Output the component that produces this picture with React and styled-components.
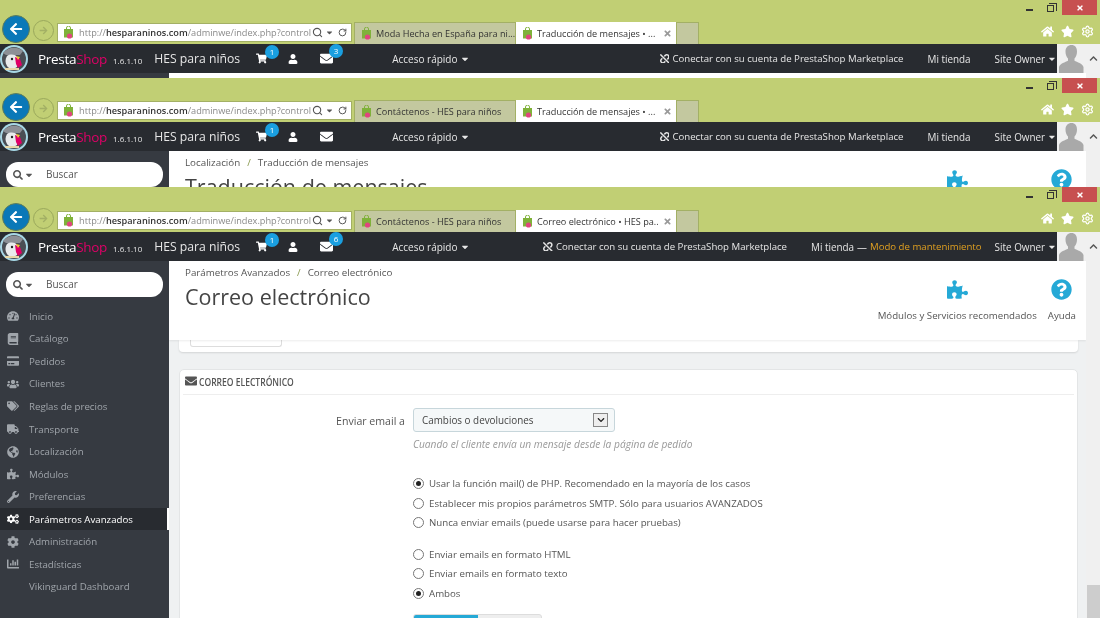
import React from "react";
import styled, { createGlobalStyle } from "styled-components";
import { Settings, Search as SearchGlyph, RotateCw } from "lucide-react";
import {
  FaTachometerAlt, FaBook, FaCreditCard, FaUsers, FaTags, FaTruck, FaGlobeAmericas, FaPuzzlePiece,
  FaWrench, FaCogs, FaCog, FaChartBar, FaShoppingCart, FaUser, FaEnvelope, FaSearch, FaQuestionCircle,
  FaUnlink, FaHome, FaStar, FaCaretDown, FaChevronUp, FaChevronDown, FaArrowLeft, FaArrowRight, FaTimes,
} from "react-icons/fa";

const Global = createGlobalStyle`
  html, body { margin: 0; padding: 0; background: #fff; overflow: hidden; }
  body { font-family: "Open Sans", "Liberation Sans", sans-serif; color: #555; }
  * { box-sizing: border-box; }
`;

const Screen = styled.div`
  width: 1100px;
  height: 618px;
  display: flex;
  flex-direction: column;
  overflow: hidden;
  filter: blur(0.3px);
`;
const Win = styled.section`
  height: ${(p) => p.$height}px;
  flex: none;
  display: flex;
  flex-direction: column;
  overflow: hidden;
  background: #fff;
`;
const Chrome = styled.header`
  height: ${(p) => p.$height}px;
  flex: none;
  display: flex;
  align-items: flex-end;
  padding-left: 2px;
  background: #c1cf74;
`;
const BackBtn = styled.div`
  width: 28px;
  height: 28px;
  margin-bottom: 1px;
  border-radius: 50%;
  flex: none;
  display: flex;
  align-items: center;
  justify-content: center;
  background: #0a78b8;
  border: 1px solid #5d7d5a;
  color: #fff;
  font-size: 14px;
`;
const FwdBtn = styled.div`
  width: 21px;
  height: 21px;
  margin: 0 3px 3px 3px;
  border-radius: 50%;
  flex: none;
  display: flex;
  align-items: center;
  justify-content: center;
  border: 1px solid #9aa85c;
  color: #a3b065;
  font-size: 9px;
`;
const Address = styled.div`
  width: 295px;
  height: 19px;
  margin-bottom: 2px;
  flex: none;
  display: flex;
  align-items: center;
  padding: 0 4px 0 5px;
  background: #fff;
  border: 1px solid #a3b065;
  font-size: 9.2px;
  color: #8a8a8a;
  white-space: nowrap;
`;
const Url = styled.span`
  margin-left: 5px;
  flex: 1;
  overflow: hidden;
  b { color: #333; font-weight: 600; }
`;
const AddressTool = styled.span`
  display: inline-flex;
  align-items: center;
  flex: none;
  color: #555;
  font-size: 9px;
  margin-left: ${(p) => p.$gap || 0}px;
`;
const Tabs = styled.div`
  display: flex;
  height: 22px;
  margin-left: 2px;
  flex: none;
`;
const Tab = styled.div`
  width: ${(p) => p.$width}px;
  display: flex;
  align-items: center;
  gap: 4px;
  padding: 0 ${(p) => (p.$active ? 4 : 0)}px 0 6px;
  background: ${(p) => (p.$active ? "#fff" : "#c3c89f")};
  border: 1px solid #a3b065;
  border-width: ${(p) => (p.$active ? "0" : "1px 1px 0 1px")};
  font-size: 9.15px;
  color: #333;
  white-space: nowrap;
  overflow: hidden;
  svg { flex: none; }
`;
const TabText = styled.span`
  flex: 1;
  min-width: 0;
  overflow: hidden;
`;
const TabClose = styled.span`
  color: #999;
  font-size: 9px;
  display: inline-flex;
  flex: none;
`;
const ChromeRight = styled.div`
  margin-left: auto;
  height: 100%;
  width: 70px;
  display: flex;
  flex-direction: column;
  align-items: flex-end;
`;
const WinControls = styled.div`
  display: flex;
  align-items: flex-start;
  height: 22px;
  padding-right: 3px;
`;
const MinBtn = styled.span`
  width: 7px;
  height: 2px;
  background: #333;
  margin: 9px 14px 0 0;
`;
const RestoreBtn = styled.span`
  position: relative;
  width: 7px;
  height: 7px;
  border: 1px solid #333;
  margin: 5px 8px 0 0;
  &::after {
    content: "";
    position: absolute;
    left: 1px;
    top: -3px;
    width: 7px;
    height: 7px;
    border: 1px solid #333;
    border-width: 1px 1px 0 0;
  }
`;
const CloseBtn = styled.span`
  width: 35px;
  height: 15px;
  background: #c75050;
  color: #fff;
  font-size: 8px;
  display: flex;
  align-items: center;
  justify-content: center;
`;
const Tools = styled.div`
  display: flex;
  gap: 7px;
  padding-right: 6px;
  color: #fff;
  font-size: 13px;
  align-items: center;
  height: 19px;
  svg { display: block; }
`;
const Row = styled.div`
  flex: 1;
  min-height: 0;
  display: flex;
`;
const Main = styled.div`
  flex: 1;
  min-width: 0;
  display: flex;
  flex-direction: column;
`;
const Scroll = styled.aside`
  width: 14px;
  flex: none;
  display: flex;
  flex-direction: column;
  align-items: center;
  background: #f0f0f0;
  padding-top: 10px;
  color: #555;
  font-size: 9px;
`;
const Thumb = styled.div`
  margin-top: auto;
  width: 13px;
  height: 33px;
  background: #cdcdcd;
`;
const Nav = styled.nav`
  height: 29px;
  flex: none;
  display: flex;
  align-items: center;
  background: #282b30;
  color: #e6e6e6;
  font-size: 10px;
  white-space: nowrap;
`;
const Logo = styled.svg`
  width: 30px;
  height: 30px;
  flex: none;
  margin-left: -1px;
`;
const Word = styled.span`
  margin-left: 9px;
  font-size: 13.5px;
  letter-spacing: -0.3px;
  color: #fff;
  i { font-style: normal; color: #df0067; }
`;
const Version = styled.span`
  margin-left: 6px;
  font-size: 8px;
  padding-top: 3px;
`;
const Shop = styled.span`
  margin-left: 12px;
  font-size: 12.2px;
`;
const NavIcon = styled.span`
  position: relative;
  display: inline-flex;
  font-size: ${(p) => p.$size || 11}px;
  margin-left: ${(p) => p.$left}px;
  color: #fff;
`;
const Badge = styled.b`
  position: absolute;
  top: -8px;
  left: 9px;
  width: 14px;
  height: 14px;
  border-radius: 50%;
  background: #1a9fe0;
  color: #fff;
  font-size: 8px;
  font-weight: 400;
  line-height: 14px;
  text-align: center;
`;
const QuickAccess = styled.span`
  margin-left: 59px;
  display: inline-flex;
  align-items: center;
  gap: 3px;
`;
const NavRight = styled.div`
  margin-left: auto;
  display: flex;
  align-items: center;
`;
const Link = styled.span`
  margin-left: ${(p) => p.$left}px;
  display: inline-flex;
  align-items: center;
  gap: ${(p) => p.$gap ?? 3}px;
  font-size: ${(p) => p.$size || 9.9}px;
`;
const Warn = styled.span`
  color: #e0a020;
  font-size: 9.65px;
`;
const Avatar = styled.svg`
  width: 29px;
  height: 29px;
  flex: none;
  background: #f0f0f0;
`;
const Body = styled.div`
  flex: 1;
  min-height: 0;
  display: flex;
`;
const Side = styled.div`
  width: 169px;
  flex: none;
  background: #363a41;
  padding-top: 11px;
  font-size: 9.7px;
  color: #a0a5ab;
`;
const Search = styled.div`
  margin: 0 6px 8px;
  height: 25px;
  border-radius: 12px;
  background: #fff;
  color: #555;
  display: flex;
  align-items: center;
  padding-left: 7px;
  gap: 1px;
  font-size: 10px;
`;
const SearchLabel = styled.span`
  margin-left: 11px;
  line-height: 25px;
  height: 25px;
`;
const Item = styled.div`
  height: 22.55px;
  display: grid;
  grid-template-columns: 29px 1fr;
  align-items: center;
  white-space: nowrap;
  background: ${(p) => (p.$active ? "#282b30" : "transparent")};
  color: ${(p) => (p.$active ? "#fff" : "inherit")};
  border-right: 2px solid ${(p) => (p.$active ? "#fff" : "transparent")};
`;
const ItemIcon = styled.span`
  display: flex;
  justify-content: center;
  padding-right: 3px;
  font-size: 12px;
`;
const Content = styled.div`
  flex: 1;
  min-width: 0;
  background: #eff1f2;
  overflow: hidden;
`;
const PageHead = styled.div`
  height: 79px;
  background: #fff;
  box-shadow: 0 1px 2px rgba(0, 0, 0, 0.08);
  display: flex;
  justify-content: space-between;
  padding: 5px 10px 0 16px;
  position: relative;
`;
const Crumbs = styled.div`
  font-size: 9.8px;
  line-height: 14px;
  color: #555;
  i { font-style: normal; color: #8a9a50; margin: 0 7px; }
`;
const Title = styled.h1`
  margin: 2px 0 0;
  font-size: 21.5px;
  line-height: 30px;
  font-weight: 400;
  color: #444;
  white-space: nowrap;
`;
const Actions = styled.div`
  display: flex;
  gap: 11px;
  padding-top: 13px;
`;
const Action = styled.div`
  display: flex;
  flex-direction: column;
  align-items: center;
  font-size: 9.7px;
  color: #555;
  white-space: nowrap;
  svg { color: #25a9d6; font-size: 21px; margin-bottom: 9px; }
`;
const Panels = styled.div`
  padding: 0 8px 0 10px;
`;
const ClippedPanel = styled.div`
  height: 12px;
  background: #fff;
  border-radius: 0 0 4px 4px;
  box-shadow: 0 1px 2px rgba(0, 0, 0, 0.12);
  margin-bottom: 17px;
  padding-left: 11px;
`;
const ClippedButton = styled.div`
  width: 92px;
  height: 7px;
  border: 1px solid #ddd;
  border-top: 0;
  border-radius: 0 0 3px 3px;
`;
const Panel = styled.div`
  background: #fff;
  border: 1px solid #e3e5e6;
  border-radius: 5px;
  padding: 0 0 40px;
`;
const PanelHead = styled.div`
  margin: 0 3px;
  height: 25px;
  padding: 0 0 2px 2px;
  display: flex;
  align-items: center;
  gap: 2px;
  border-bottom: 1px solid #eee;
  font-size: 11.4px;
  font-weight: 600;
  color: #555;
  svg { font-size: 12px; flex: none; }
`;
const PanelTitle = styled.span`
  display: inline-block;
  white-space: nowrap;
  transform: scaleX(0.75);
  transform-origin: left center;
`;
const Form = styled.div`
  display: grid;
  grid-template-columns: 225px 1fr;
  column-gap: 8px;
  padding-top: 13px;
`;
const Label = styled.label`
  text-align: right;
  font-size: 10.6px;
  line-height: 26px;
  color: #555;
`;
const Select = styled.div`
  width: 202px;
  height: 24px;
  display: flex;
  align-items: center;
  justify-content: space-between;
  padding: 0 6px 0 8px;
  background: #f5f8f9;
  border: 1px solid #c7d6db;
  border-radius: 3px;
  font-size: 9.9px;
  color: #444;
`;
const SelectArrow = styled.span`
  width: 15px;
  height: 14px;
  display: flex;
  align-items: center;
  justify-content: center;
  background: #eee;
  border: 1px solid #888;
  color: #222;
  font-size: 8px;
`;
const Help = styled.p`
  margin: 5px 0 23px;
  font-size: 10.2px;
  line-height: 14px;
  font-style: italic;
  color: #999;
`;
const Group = styled.div`
  margin-bottom: ${(p) => p.$after}px;
`;
const Option = styled.div`
  height: 19.5px;
  display: flex;
  align-items: center;
  gap: 5px;
  font-size: 9.7px;
  color: #555;
  white-space: nowrap;
`;
const Radio = styled.span`
  width: 11px;
  height: 11px;
  flex: none;
  border-radius: 50%;
  border: 1px solid #777;
  background: #fff;
  display: flex;
  align-items: center;
  justify-content: center;
  &::after {
    content: "";
    width: 5px;
    height: 5px;
    border-radius: 50%;
    background: ${(p) => (p.$on ? "#222" : "transparent")};
  }
`;
const Toggle = styled.div`
  width: 129px;
  height: 24px;
  display: flex;
  border-radius: 3px;
  overflow: hidden;
  background: #eee;
  border: 1px solid #ddd;
`;
const ToggleOn = styled.span`
  width: 64px;
  background: #25a9d6;
`;

const Favicon = () => (
  <svg width="11" height="13" viewBox="0 0 11 13">
    <path d="M1 3h9v8.5H1z" fill="#7fb13a" />
    <path d="M3.5 3.5V2a2 2 0 0 1 4 0v1.5" fill="none" stroke="#7fb13a" />
    <circle cx="6.5" cy="10" r="2.6" fill="#e0457f" />
  </svg>
);
const PuffinLogo = () => (
  <Logo viewBox="0 0 30 30">
    <circle cx="15" cy="15" r="14" fill="#a8d8e6" />
    <circle cx="15" cy="15" r="12" fill="#4a4e54" />
    <path d="M4 9c5-6 14-7 20-2l-3 4H7z" fill="#8d9096" />
    <path d="M8 12c3-2 8-2 10 1 1 3 1 7 0 10-4 3-8 2-10-1-2-3-2-7 0-10z" fill="#e9ebec" />
    <path d="M16 13l5 2 2 6-4 3-2-4z" fill="#df0067" />
    <path d="M17 12l4 1-2 3z" fill="#f4c430" />
    <circle cx="13" cy="15" r="1.2" fill="#222" />
    <path d="M6 24h14v2H6z" fill="#e8d9a8" />
  </Logo>
);
const UserSilhouette = () => (
  <Avatar viewBox="0 0 29 29">
    <path
      d="M14.5 1c3.6 0 5.5 2.6 5.5 6.500 0 3-1 5.400-2.500 7v2.200c2.500 1.500 8 2.500 9 6.300V29H2v-6c1-3.800 6.500-4.800 9-6.300v-2.200c-1.500-1.600-2.500-4-2.500-7C8.500 3.600 10.900 1 14.500 1z"
      fill="#a9a9a9"
    />
  </Avatar>
);

const menu = [
  ["Inicio", FaTachometerAlt],
  ["Catálogo", FaBook],
  ["Pedidos", FaCreditCard],
  ["Clientes", FaUsers],
  ["Reglas de precios", FaTags],
  ["Transporte", FaTruck],
  ["Localización", FaGlobeAmericas],
  ["Módulos", FaPuzzlePiece],
  ["Preferencias", FaWrench],
  ["Parámetros Avanzados", FaCogs, true],
  ["Administración", FaCog],
  ["Estadísticas", FaChartBar],
  ["Vikinguard Dashboard", null],
];

function Window({ height, chrome = 44, host, tab1, tab2, mail, maintenance, thumb, crumb1, crumb2, title, children }) {
  return (
    <Win $height={height}>
      <Chrome $height={chrome}>
        <BackBtn><FaArrowLeft /></BackBtn>
        <FwdBtn><FaArrowRight /></FwdBtn>
        <Address>
          <Favicon />
          <Url>http://<b>{host}</b>/adminwe/index.php?control</Url>
          <AddressTool><SearchGlyph size={11} strokeWidth={2.4} /></AddressTool>
          <AddressTool $gap={2}><FaCaretDown /></AddressTool>
          <AddressTool $gap={4}><RotateCw size={9} strokeWidth={2.6} /></AddressTool>
        </Address>
        <Tabs>
          <Tab $width={162}><Favicon /><TabText>{tab1}</TabText></Tab>
          <Tab $width={160} $active><Favicon /><TabText>{tab2}</TabText><TabClose><FaTimes /></TabClose></Tab>
          <Tab $width={23} />
        </Tabs>
        <ChromeRight>
          <WinControls>
            <MinBtn /><RestoreBtn /><CloseBtn><FaTimes /></CloseBtn>
          </WinControls>
          <Tools><FaHome /><FaStar /><Settings size={13} strokeWidth={2.4} /></Tools>
        </ChromeRight>
      </Chrome>
      <Row>
        <Main>
          <Nav>
            <PuffinLogo />
            <Word>Presta<i>Shop</i></Word>
            <Version>1.6.1.10</Version>
            <Shop>HES para niños</Shop>
            <NavIcon $left={16} $size={11}><FaShoppingCart /><Badge>1</Badge></NavIcon>
            <NavIcon $left={21} $size={10}><FaUser /></NavIcon>
            <NavIcon $left={22} $size={13}><FaEnvelope />{mail && <Badge>{mail}</Badge>}</NavIcon>
            <QuickAccess>Acceso rápido <FaCaretDown /></QuickAccess>
            <NavRight>
              <Link $left={0} $size={9.65}><FaUnlink />Conectar con su cuenta de PrestaShop Marketplace</Link>
              <Link $left={24}>Mi tienda</Link>
              {maintenance && <Link $left={3}>— <Warn>Modo de mantenimiento</Warn></Link>}
              <Link $left={maintenance ? 13 : 24} $gap={2}>Site Owner <FaCaretDown /></Link>
              <UserSilhouette />
            </NavRight>
          </Nav>
          <Body>
            <Side>
              <Search>
                <FaSearch /><FaCaretDown />
                <SearchLabel>Buscar</SearchLabel>
              </Search>
              {menu.map(([label, Icon, active]) => (
                <Item key={label} $active={active}>
                  <ItemIcon>{Icon && <Icon />}</ItemIcon>
                  <span>{label}</span>
                </Item>
              ))}
            </Side>
            <Content>
              <PageHead>
                <div>
                  <Crumbs>{crumb1}<i>/</i>{crumb2}</Crumbs>
                  <Title>{title}</Title>
                </div>
                <Actions>
                  <Action><FaPuzzlePiece />Módulos y Servicios recomendados</Action>
                  <Action><FaQuestionCircle />Ayuda</Action>
                </Actions>
              </PageHead>
              {children}
            </Content>
          </Body>
        </Main>
        <Scroll>
          <FaChevronUp />
          {thumb && <Thumb />}
        </Scroll>
      </Row>
    </Win>
  );
}

export default function App() {
  return (
    <Screen>
      <Global />
      <Window height={78} host="hesparaninos.com" tab1="Moda Hecha en España para ni..." tab2="Traducción de mensajes • ..." mail="3" crumb1="Localización" crumb2="Traducción de mensajes" title="Traducción de mensajes" />
      <Window height={109} host="hesparaninos.com" tab1="Contáctenos - HES para niños" tab2="Traducción de mensajes • ..." crumb1="Localización" crumb2="Traducción de mensajes" title="Traducción de mensajes" />
      <Window height={431} chrome={45} host="hesparaninos.com" tab1="Contáctenos - HES para niños" tab2="Correo electrónico • HES pa..." mail="6" maintenance thumb crumb1="Parámetros Avanzados" crumb2="Correo electrónico" title="Correo electrónico">
        <Panels>
          <ClippedPanel><ClippedButton /></ClippedPanel>
          <Panel>
            <PanelHead><FaEnvelope /><PanelTitle>CORREO ELECTRÓNICO</PanelTitle></PanelHead>
            <Form>
              <Label>Enviar email a</Label>
              <div>
                <Select>Cambios o devoluciones<SelectArrow><FaChevronDown /></SelectArrow></Select>
                <Help>Cuando el cliente envía un mensaje desde la página de pedido</Help>
                <Group $after={12}>
                  <Option><Radio $on />Usar la función mail() de PHP. Recomendado en la mayoría de los casos</Option>
                  <Option><Radio />Establecer mis propios parámetros SMTP. Sólo para usuarios AVANZADOS</Option>
                  <Option><Radio />Nunca enviar emails (puede usarse para hacer pruebas)</Option>
                </Group>
                <Group $after={11}>
                  <Option><Radio />Enviar emails en formato HTML</Option>
                  <Option><Radio />Enviar emails en formato texto</Option>
                  <Option><Radio $on />Ambos</Option>
                </Group>
                <Toggle><ToggleOn /></Toggle>
              </div>
            </Form>
          </Panel>
        </Panels>
      </Window>
    </Screen>
  );
}
